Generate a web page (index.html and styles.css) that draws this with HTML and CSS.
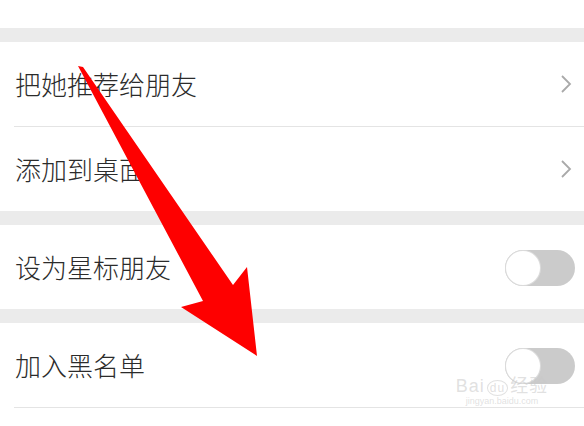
FILE: index.html
```html
<!DOCTYPE html>
<html lang="zh-CN">
<head>
  <meta charset="UTF-8" />
  <meta name="viewport" content="width=device-width, initial-scale=1.0"/>
  <title>资料设置</title>
  <link rel="stylesheet" href="styles.css">
</head>
<body>
  <div class="page">
    <div class="top-row"></div>
    <div class="gap"></div>

    <div class="group">
      <div class="row">
        <div class="row-inner divided">
          <span class="label">把她推荐给朋友</span>
          <svg class="chevron" viewBox="0 0 12 20" width="12" height="20">
            <polyline points="2,2 10,10 2,18" fill="none" stroke="#a9a9a9" stroke-width="1.8" stroke-linejoin="miter"/>
          </svg>
        </div>
      </div>
      <div class="row">
        <div class="row-inner">
          <span class="label">添加到桌面</span>
          <svg class="chevron" viewBox="0 0 12 20" width="12" height="20">
            <polyline points="2,2 10,10 2,18" fill="none" stroke="#a9a9a9" stroke-width="1.8" stroke-linejoin="miter"/>
          </svg>
        </div>
      </div>
    </div>
    <div class="gap"></div>

    <div class="group">
      <div class="row">
        <div class="row-inner">
          <span class="label">设为星标朋友</span>
          <span class="switch"><span class="knob"></span></span>
        </div>
      </div>
    </div>
    <div class="gap"></div>

    <div class="group">
      <div class="row">
        <div class="row-inner divided">
          <span class="label">加入黑名单</span>
          <span class="switch"><span class="knob"></span></span>
        </div>
      </div>
    </div>

    <!-- annotation arrow drawn over the screenshot -->
    <svg class="arrow" viewBox="0 0 584 426" width="584" height="426">
      <polygon points="78,66 83,67 233,285 247,267 257,356 181,307 203,301" fill="#fe0000"/>
    </svg>

    <div class="watermark">
      <div class="wm-logo">Bai<span class="wm-du">du</span>经验</div>
      <div class="wm-url">jingyan.baidu.com</div>
    </div>
  </div>
</body>
</html>
```

FILE: styles.css
```css
:root {
  --text: #2b2b2b;
  --gap-bg: #ebebeb;
  --line: #e4e4e4;
  --track: #cbcbcb;
}
body {
  margin: 0;
  background: #fff;
  font-family: "Noto Sans CJK SC", "Noto Sans", sans-serif;
  color: var(--text);
}
.page {
  position: relative;
  width: 584px;
  height: 426px;
  overflow: hidden;
}
.top-row {
  height: 28px;
}
.gap {
  height: 14px;
  background: var(--gap-bg);
}
.row {
  padding-left: 14px;
}
.row-inner {
  height: 84px;
  display: flex;
  align-items: center;
  justify-content: space-between;
}
.row-inner.divided {
  border-bottom: 1px solid var(--line);
}
.label {
  font-size: 26px;
  font-weight: 300;
  line-height: 1;
  padding-left: 1px;
}
.chevron {
  margin-right: 12px;
}
.switch {
  width: 70px;
  height: 36px;
  border-radius: 18px;
  background: var(--track);
  margin-right: 9px;
  margin-top: 1px;
  display: flex;
  align-items: center;
  padding-left: 1px;
  box-sizing: border-box;
}
.knob {
  width: 34px;
  height: 34px;
  border-radius: 50%;
  background: #fff;
  box-shadow: 0 0 0 1px #dcdcdc;
}
.arrow {
  position: absolute;
  left: 0;
  top: 0;
}
.watermark {
  position: absolute;
  left: 450px;
  top: 376px;
  width: 104px;
  text-align: center;
  color: rgba(200, 200, 200, 0.55);
  font-family: "Liberation Sans", "Noto Sans CJK SC", sans-serif;
}
.wm-logo {
  font-size: 18px;
  line-height: 20px;
  letter-spacing: 1px;
}
.wm-du {
  display: inline-block;
  font-size: 12px;
  border: 1px solid rgba(200, 200, 200, 0.55);
  border-radius: 50%;
  padding: 0 2px;
  margin: 0 2px;
  line-height: 14px;
}
.wm-url {
  font-size: 9px;
  line-height: 11px;
}
```
